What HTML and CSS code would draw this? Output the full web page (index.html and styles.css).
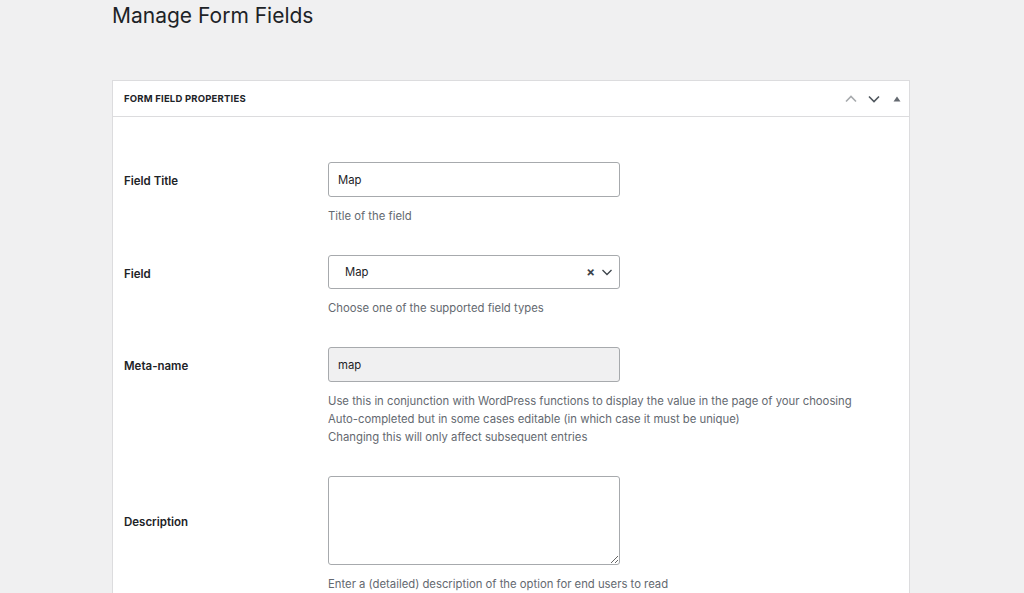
FILE: index.html
```html
<!DOCTYPE html>
<html lang="en">

<head>
    <meta charset="UTF-8">
    <meta name="viewport" content="width=device-width, initial-scale=1.0">
    <title>Manage Form Fields</title>
    <link rel="stylesheet" href="styles.css">
</head>

<body>

    <div class="wrap">
        <h1 class="page-title">Manage Form Fields</h1>

        <!-- 字段属性面板 -->
        <div class="postbox">
            <div class="postbox-header">
                <h2 class="postbox-title">Form Field Properties</h2>
                <div class="handle-actions">
                    <button class="handle-btn disabled" title="Move up">
                        <svg width="14" height="14" viewBox="0 0 14 14"><path d="M2 9.5 L7 4.5 L12 9.5" fill="none" stroke="currentColor" stroke-width="1.6"/></svg>
                    </button>
                    <button class="handle-btn" title="Move down">
                        <svg width="14" height="14" viewBox="0 0 14 14"><path d="M2 4.5 L7 9.5 L12 4.5" fill="none" stroke="currentColor" stroke-width="1.6"/></svg>
                    </button>
                    <button class="handle-btn toggle" title="Toggle panel">
                        <svg width="10" height="10" viewBox="0 0 10 10"><path d="M1.5 7.5 L5 2.5 L8.5 7.5 Z" fill="currentColor"/></svg>
                    </button>
                </div>
            </div>

            <div class="inside">
                <div class="field-row">
                    <label class="field-label" for="field-title">Field Title</label>
                    <div class="field-control">
                        <input type="text" id="field-title" class="text-input" value="Map">
                        <p class="description">Title of the field</p>
                    </div>
                </div>

                <div class="field-row">
                    <label class="field-label">Field</label>
                    <div class="field-control">
                        <div class="select-box">
                            <span class="select-value">Map</span>
                            <span class="select-clear">&times;</span>
                            <svg class="select-arrow" width="12" height="12" viewBox="0 0 12 12"><path d="M1.5 4 L6 8.5 L10.5 4" fill="none" stroke="currentColor" stroke-width="1.3"/></svg>
                        </div>
                        <p class="description">Choose one of the supported field types</p>
                    </div>
                </div>

                <div class="field-row">
                    <label class="field-label" for="meta-name">Meta-name</label>
                    <div class="field-control">
                        <input type="text" id="meta-name" class="text-input readonly" value="map" readonly>
                        <p class="description">
                            Use this in conjunction with WordPress functions to display the value in the page of your choosing<br>
                            Auto-completed but in some cases editable (in which case it must be unique)<br>
                            Changing this will only affect subsequent entries
                        </p>
                    </div>
                </div>

                <div class="field-row textarea-row">
                    <label class="field-label" for="description">Description</label>
                    <div class="field-control">
                        <textarea id="description" class="text-area"></textarea>
                        <p class="description">Enter a (detailed) description of the option for end users to read</p>
                    </div>
                </div>
            </div>
        </div>
    </div>

</body>

</html>
```

FILE: styles.css
```css
html,
body {
    margin: 0;
    background-color: #f0f0f1;
    font-family: Inter, "Noto Sans", sans-serif;
    color: #1d2327;
}

.wrap {
    margin-left: 112px;
    width: 798px;
}

.page-title {
    margin: 0;
    padding-top: 3px;
    font-size: 21px;
    font-weight: 400;
    line-height: 26px;
    color: #1d2327;
}

/* 面板 */
.postbox {
    margin-top: 51px;
    background-color: #fff;
    border: 1px solid #dcdcde;
}

.postbox-header {
    display: flex;
    align-items: center;
    justify-content: space-between;
    height: 35px;
    border-bottom: 1px solid #dcdcde;
    padding-left: 11px;
}

.postbox-title {
    margin: 0;
    font-size: 9.5px;
    font-weight: 700;
    text-transform: uppercase;
    letter-spacing: 0.2px;
    color: #1d2327;
}

.handle-actions {
    display: flex;
    align-items: center;
    padding-right: 1px;
}

.handle-btn {
    display: flex;
    align-items: center;
    justify-content: center;
    width: 23px;
    height: 30px;
    padding: 0;
    border: none;
    background: transparent;
    color: #50575e;
    cursor: pointer;
}

.handle-btn.disabled {
    color: #a7aaad;
}

.handle-btn.toggle {
    color: #646970;
}

/* 表单行 */
.inside {
    padding: 45px 11px 20px;
}

.field-row {
    display: grid;
    grid-template-columns: 204px 292px;
    align-items: start;
    margin-bottom: 30px;
}

.field-label {
    padding-top: 2px;
    font-size: 11.5px;
    font-weight: 600;
    line-height: 35px;
}

.textarea-row .field-label {
    align-self: start;
    margin-top: 27px;
}

.text-input {
    box-sizing: border-box;
    width: 292px;
    height: 35px;
    margin: 0;
    padding: 0 9px;
    border: 1px solid #a7aaad;
    border-radius: 3px;
    font-family: inherit;
    font-size: 11.3px;
    color: #1d2327;
    background-color: #fff;
}

.text-input.readonly {
    background-color: #f0f0f1;
}

.description {
    margin: 10px 0 0;
    font-size: 11.3px;
    line-height: 18px;
    color: #646970;
    white-space: nowrap;
}

/* 下拉选择 */
.select-box {
    box-sizing: border-box;
    display: flex;
    align-items: center;
    height: 34px;
    padding: 0 6px 0 16px;
    border: 1px solid #a7aaad;
    border-radius: 3px;
    font-size: 11.3px;
    background-color: #fff;
}

.select-value {
    flex: 1;
}

.select-clear {
    font-size: 13px;
    font-weight: 700;
    color: #3c434a;
    margin-right: 6px;
}

.select-arrow {
    color: #3c434a;
}

.text-area {
    box-sizing: border-box;
    display: block;
    width: 292px;
    height: 89px;
    margin: 0;
    border: 1px solid #a7aaad;
    border-radius: 3px;
    font-family: inherit;
}
```
